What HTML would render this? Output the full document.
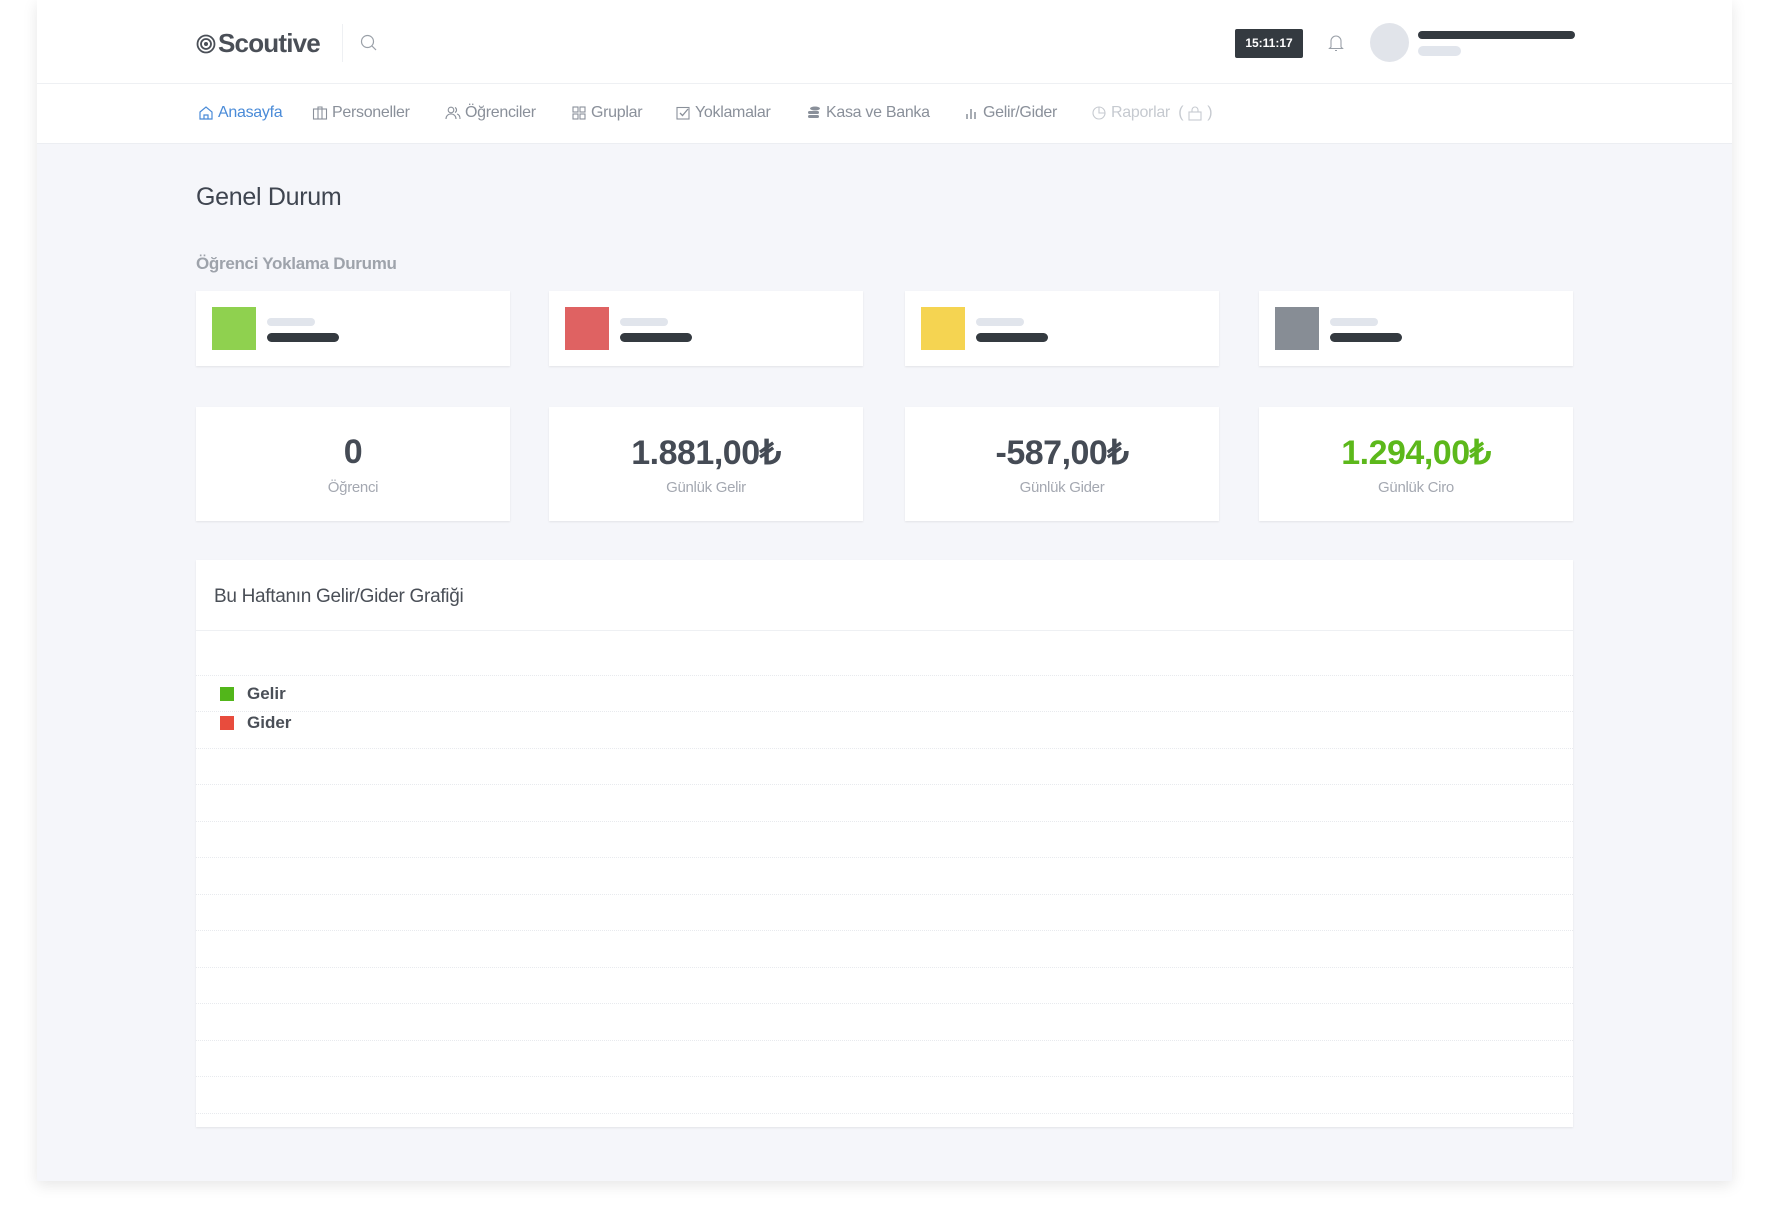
<!DOCTYPE html>
<html><head><meta charset="utf-8">
<style>
*{margin:0;padding:0;box-sizing:border-box}
body{width:1769px;height:1220px;background:#fff;font-family:"Liberation Sans",sans-serif;position:relative;overflow:hidden;color:#3f4550}
.frame{position:absolute;left:37px;top:0;width:1695px;height:1181px;background:#f5f6fa;box-shadow:0 4px 14px rgba(0,0,0,.10)}
.hdr{position:absolute;left:0;top:0;width:1695px;height:84px;background:#fff;border-bottom:1px solid #eef0f3}
.nav{position:absolute;left:0;top:84px;width:1695px;height:60px;background:#fff;border-bottom:1px solid #eceef2}
.a{position:absolute}
.navi{position:absolute;top:104px;font-size:16px;color:#8a909a;display:flex;align-items:center;gap:4px;white-space:nowrap;letter-spacing:-0.3px}
.navi svg{width:16px;height:16px}
.card{position:absolute;background:#fff;box-shadow:0 1px 2px rgba(0,0,0,.08)}
.sq{position:absolute;left:16px;top:16px;width:44px;height:43px}
.lb{position:absolute;left:71px;top:27px;width:48px;height:8px;border-radius:4px;background:#e1e5ec}
.db{position:absolute;left:71px;top:42px;width:72px;height:9px;border-radius:5px;background:#343a40}
.num{position:absolute;left:0;right:0;top:26px;text-align:center;font-size:34px;font-weight:bold;color:#454b55;letter-spacing:-0.5px}
.lab{position:absolute;left:0;right:0;top:72px;text-align:center;font-size:15px;color:#a4a8b1;letter-spacing:-0.3px}
.grid{position:absolute;left:0;right:0;border-top:1px dotted #e8eaee}
</style></head><body>
<div class="frame">
 <div class="hdr">
  <div class="a" style="left:159px;top:28px;font-size:26px;font-weight:bold;color:#4a4f57;letter-spacing:-0.8px;display:flex;align-items:center;gap:2px">
   <svg width="20" height="20" viewBox="0 0 20 20"><circle cx="10" cy="10" r="8.5" fill="none" stroke="#4a4f57" stroke-width="1.8"/><circle cx="10" cy="10" r="5" fill="none" stroke="#4a4f57" stroke-width="1.8"/><circle cx="10" cy="10" r="2" fill="#4a4f57"/></svg>Scoutive</div>
  <div class="a" style="left:305px;top:24px;width:1px;height:38px;background:#eef0f3"></div>
  <svg class="a" style="left:323px;top:34px" width="18" height="18" viewBox="0 0 18 18"><circle cx="7.5" cy="7.5" r="6" fill="none" stroke="#9aa0a8" stroke-width="1.2"/><path d="M12 12l4 4" stroke="#9aa0a8" stroke-width="1.2"/></svg>
  <div class="a" style="left:1198px;top:29px;width:68px;height:29px;background:#343a40;border-radius:2px;color:#fff;font-size:12px;font-weight:bold;text-align:center;line-height:29px">15:11:17</div>
  <svg class="a" style="left:1291px;top:33px" width="16" height="20" viewBox="0 0 16 20"><path d="M3 14V8a5 5 0 0 1 10 0v6l1.5 1.5h-13z" fill="none" stroke="#9aa0a8" stroke-width="1.1"/><path d="M7 17.5h2" stroke="#9aa0a8"/></svg>
  <div class="a" style="left:1333px;top:23px;width:39px;height:39px;border-radius:50%;background:#e1e4ea"></div>
  <div class="a" style="left:1381px;top:31px;width:157px;height:8px;border-radius:4px;background:#343a40"></div>
  <div class="a" style="left:1381px;top:46px;width:43px;height:10px;border-radius:5px;background:#e1e5ec"></div>
 </div>
 <div class="nav"></div>
 <div class="navi" style="left:161px;color:#4a8bd8"><svg viewBox="0 0 16 16"><path d="M2 7l6-5 6 5v7H2z M6 14v-4h4v4" fill="none" stroke="#4a8bd8" stroke-width="1.2"/></svg>Anasayfa</div>
 <div class="navi" style="left:275px"><svg viewBox="0 0 16 16"><rect x="1.5" y="4" width="13" height="10" fill="none" stroke="#8a909a" stroke-width="1.1"/><path d="M6 4V2h4v2M6 4v10M10 4v10" fill="none" stroke="#8a909a" stroke-width="1.1"/></svg>Personeller</div>
 <div class="navi" style="left:408px"><svg viewBox="0 0 16 16"><circle cx="6" cy="5" r="2.8" fill="none" stroke="#8a909a" stroke-width="1.1"/><path d="M1 14c0-3 2-5 5-5s5 2 5 5M10 2.5a2.8 2.8 0 0 1 0 5M12 9c2 .5 3 2.5 3 5" fill="none" stroke="#8a909a" stroke-width="1.1"/></svg>Öğrenciler</div>
 <div class="navi" style="left:534px"><svg viewBox="0 0 16 16"><g fill="none" stroke="#8a909a" stroke-width="1.1"><rect x="2" y="2" width="5" height="5"/><rect x="9" y="2" width="5" height="5"/><rect x="2" y="9" width="5" height="5"/><rect x="9" y="9" width="5" height="5"/></g></svg>Gruplar</div>
 <div class="navi" style="left:638px"><svg viewBox="0 0 16 16"><rect x="2" y="2.5" width="12" height="11.5" fill="none" stroke="#8a909a" stroke-width="1.1"/><path d="M5 8l2.5 2.5L13 4" fill="none" stroke="#8a909a" stroke-width="1.3"/></svg>Yoklamalar</div>
 <div class="navi" style="left:769px"><svg viewBox="0 0 16 16"><g fill="#8a909a"><ellipse cx="9" cy="3.5" rx="5" ry="2"/><rect x="2" y="6" width="11" height="3" rx="1.5"/><rect x="2" y="10" width="11" height="3" rx="1.5"/></g></svg>Kasa ve Banka</div>
 <div class="navi" style="left:926px"><svg viewBox="0 0 16 16"><path d="M4 14V9M8 14V4M12 14V7" stroke="#8a909a" stroke-width="1.5"/></svg>Gelir/Gider</div>
 <div class="navi" style="left:1054px;color:#c6cad0"><svg viewBox="0 0 16 16"><circle cx="8" cy="8" r="6" fill="none" stroke="#c6cad0" stroke-width="1.1"/><path d="M8 2v6h6" fill="none" stroke="#c6cad0" stroke-width="1.1"/></svg>Raporlar &nbsp;(<svg viewBox="0 0 16 16"><rect x="2" y="7" width="12" height="8" fill="none" stroke="#c6cad0" stroke-width="1.1"/><path d="M5 7V5a3 3 0 0 1 6 0v2" fill="none" stroke="#c6cad0" stroke-width="1.1"/></svg>)</div>

 <div class="a" style="left:159px;top:183px;font-size:25px;color:#3f4550;letter-spacing:-0.3px">Genel Durum</div>
 <div class="a" style="left:159px;top:254px;font-size:17px;font-weight:bold;color:#9ea3ab;letter-spacing:-0.3px">Öğrenci Yoklama Durumu</div>

 <div class="card" style="left:159px;top:291px;width:314px;height:75px"><div class="sq" style="background:#8fd14f"></div><div class="lb"></div><div class="db"></div></div>
 <div class="card" style="left:512px;top:291px;width:314px;height:75px"><div class="sq" style="background:#df6262"></div><div class="lb"></div><div class="db"></div></div>
 <div class="card" style="left:868px;top:291px;width:314px;height:75px"><div class="sq" style="background:#f5d451"></div><div class="lb"></div><div class="db"></div></div>
 <div class="card" style="left:1222px;top:291px;width:314px;height:75px"><div class="sq" style="background:#878d95"></div><div class="lb"></div><div class="db"></div></div>

 <div class="card" style="left:159px;top:407px;width:314px;height:114px"><div class="num">0</div><div class="lab">Öğrenci</div></div>
 <div class="card" style="left:512px;top:407px;width:314px;height:114px"><div class="num">1.881,00₺</div><div class="lab">Günlük Gelir</div></div>
 <div class="card" style="left:868px;top:407px;width:314px;height:114px"><div class="num">-587,00₺</div><div class="lab">Günlük Gider</div></div>
 <div class="card" style="left:1222px;top:407px;width:314px;height:114px"><div class="num" style="color:#5cb81b">1.294,00₺</div><div class="lab">Günlük Ciro</div></div>

 <div class="card" style="left:159px;top:560px;width:1377px;height:567px">
  <div class="a" style="left:18px;top:26px;font-size:19px;color:#4a4f57;letter-spacing:-0.3px">Bu Haftanın Gelir/Gider Grafiği</div>
  <div class="a" style="left:0;right:0;top:70px;border-top:1px solid #eef0f3"></div>
  <div class="grid" style="top:115px"></div><div class="grid" style="top:151px"></div><div class="grid" style="top:188px"></div><div class="grid" style="top:224px"></div><div class="grid" style="top:261px"></div><div class="grid" style="top:297px"></div><div class="grid" style="top:334px"></div><div class="grid" style="top:370px"></div><div class="grid" style="top:407px"></div><div class="grid" style="top:443px"></div><div class="grid" style="top:480px"></div><div class="grid" style="top:516px"></div><div class="grid" style="top:553px"></div>
  <div class="a" style="left:24px;top:127px;width:14px;height:14px;background:#52b61a"></div>
  <div class="a" style="left:51px;top:124px;font-size:17px;font-weight:bold;color:#4a4f57">Gelir</div>
  <div class="a" style="left:24px;top:156px;width:14px;height:14px;background:#e84c3d"></div>
  <div class="a" style="left:51px;top:153px;font-size:17px;font-weight:bold;color:#4a4f57">Gider</div>
 </div>
</div>
</body></html>
